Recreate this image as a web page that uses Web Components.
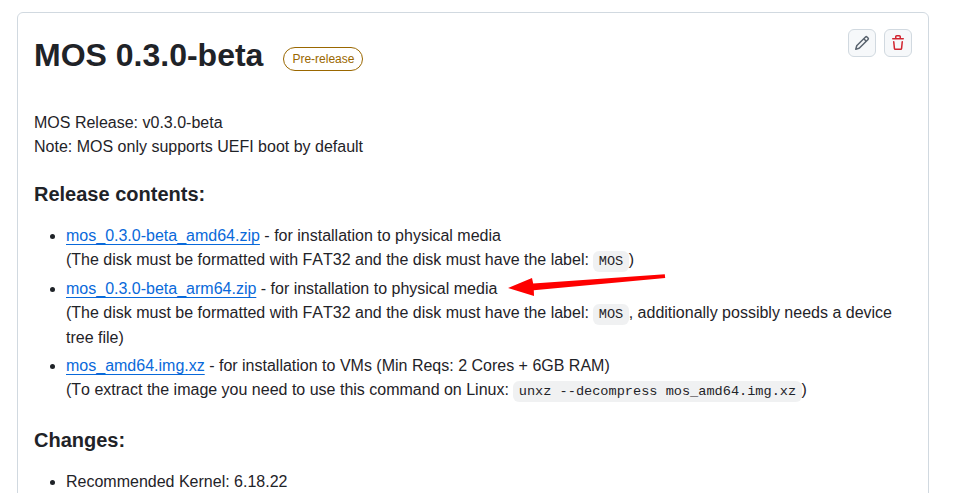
<!DOCTYPE html>
<html lang="en">
<head>
<meta charset="utf-8">
<title>MOS 0.3.0-beta</title>
<style>
    html, body { height: 100%; overflow: hidden; }
    body {
        margin: 0;
        background: #fff;
        color: #1f2328;
        font: 16px/24px "Liberation Sans", Arial, sans-serif;
        font-kerning: none;
    }
</style>
</head>
<body>
<release-page>
    <release-card heading="MOS 0.3.0-beta" label="Pre-release">
        <md-para>MOS Release: v0.3.0-beta<br>Note: MOS only supports UEFI boot by default</md-para>
        <md-heading>Release contents:</md-heading>
        <md-list>
            <md-item><md-link>mos_0.3.0-beta_amd64.zip</md-link> - for installation to physical media<br>(The disk must be formatted with FAT32 and the disk must have the label: <md-code>MOS</md-code>)</md-item>
            <md-item><md-link>mos_0.3.0-beta_arm64.zip</md-link> - for installation to physical media<br>(The disk must be formatted with FAT32 and the disk must have the label: <md-code>MOS</md-code>, additionally possibly needs a device tree file)</md-item>
            <md-item><md-link>mos_amd64.img.xz</md-link> - for installation to VMs (Min Reqs: 2 Cores + 6GB RAM)<br>(To extract the image you need to use this command on Linux: <md-code>unxz --decompress mos_amd64.img.xz</md-code>)</md-item>
        </md-list>
        <md-heading>Changes:</md-heading>
        <md-list>
            <md-item>Recommended Kernel: 6.18.22</md-item>
        </md-list>
    </release-card>
    <red-arrow></red-arrow>
</release-page>

<script>
class ReleasePage extends HTMLElement {
    constructor() {
        super();
        this.attachShadow({ mode: 'open' });
        this.shadowRoot.innerHTML = `
            <style>
                :host {
                    display: block;
                    position: relative;
                    padding: 12px 26px 0 17px;
                }
            </style>
            <slot></slot>
        `;
    }
}

class ReleaseCard extends HTMLElement {
    constructor() {
        super();
        this.attachShadow({ mode: 'open' });
    }

    connectedCallback() {
        const heading = this.getAttribute('heading');
        const label = this.getAttribute('label');

        this.shadowRoot.innerHTML = `
            <style>
                :host {
                    display: block;
                    border: 1px solid #d1d9e0;
                    border-radius: 6px;
                    padding: 16px;
                }
                .head {
                    display: flex;
                    align-items: flex-start;
                    justify-content: space-between;
                    margin-bottom: 30px;
                }
                .title {
                    display: flex;
                    align-items: center;
                    gap: 20px;
                }
                h1 {
                    margin: 0;
                    font-size: 32px;
                    line-height: 52px;
                    font-weight: 700;
                }
                .label {
                    display: inline-block;
                    border: 1px solid #9a6700;
                    border-radius: 12px;
                    padding: 0 8px;
                    margin-top: 8px;
                    font-size: 12px;
                    line-height: 22px;
                    font-weight: 500;
                    color: #9a6700;
                }
                .actions {
                    display: flex;
                    gap: 8px;
                }
            </style>
            <div class="head">
                <div class="title">
                    <h1>${heading}</h1>
                    <span class="label">${label}</span>
                </div>
                <div class="actions">
                    <icon-button icon="pencil" aria-label="Edit"></icon-button>
                    <icon-button icon="trash" aria-label="Delete"></icon-button>
                </div>
            </div>
            <slot></slot>
        `;
    }
}

const icons = {
    pencil: { color: '#59636e', d: 'M11.013 1.427a1.75 1.75 0 0 1 2.474 0l1.086 1.086a1.75 1.75 0 0 1 0 2.474l-8.61 8.61c-.21.21-.47.364-.756.445l-3.251.93a.75.75 0 0 1-.927-.928l.929-3.25c.081-.286.235-.547.445-.758l8.61-8.61Zm.176 4.823L9.75 4.81l-6.286 6.287a.253.253 0 0 0-.064.108l-.558 1.953 1.953-.558a.253.253 0 0 0 .108-.064Zm1.238-3.763a.25.25 0 0 0-.354 0L10.811 3.75l1.439 1.44 1.263-1.263a.25.25 0 0 0 0-.354Z' },
    trash: { color: '#d1242f', d: 'M11 1.75V3h2.25a.75.75 0 0 1 0 1.5H2.75a.75.75 0 0 1 0-1.5H5V1.75C5 .784 5.784 0 6.75 0h2.5C10.216 0 11 .784 11 1.75ZM4.496 6.675l.66 6.6a.25.25 0 0 0 .249.225h5.19a.25.25 0 0 0 .249-.225l.66-6.6a.75.75 0 0 1 1.492.149l-.66 6.6A1.748 1.748 0 0 1 10.595 15h-5.19a1.75 1.75 0 0 1-1.741-1.575l-.66-6.6a.75.75 0 1 1 1.492-.15ZM6.5 1.75V3h3V1.75a.25.25 0 0 0-.25-.25h-2.5a.25.25 0 0 0-.25.25Z' }
};

class IconButton extends HTMLElement {
    constructor() {
        super();
        this.attachShadow({ mode: 'open' });
    }

    connectedCallback() {
        const icon = icons[this.getAttribute('icon')];

        this.shadowRoot.innerHTML = `
            <style>
                :host {
                    display: flex;
                    align-items: center;
                    justify-content: center;
                    width: 26px;
                    height: 26px;
                    background: #f6f8fa;
                    border: 1px solid #d1d9e0;
                    border-radius: 6px;
                }
                svg { display: block; fill: ${icon.color}; }
            </style>
            <svg width="16" height="16" viewBox="0 0 16 16"><path d="${icon.d}"></path></svg>
        `;
    }
}

class MdPara extends HTMLElement {
    constructor() {
        super();
        this.attachShadow({ mode: 'open' });
        this.shadowRoot.innerHTML = `
            <style>:host { display: block; margin-bottom: 16px; }</style><slot></slot>`;
    }
}

class MdHeading extends HTMLElement {
    constructor() {
        super();
        this.attachShadow({ mode: 'open' });
        this.shadowRoot.innerHTML = `
            <style>
                :host {
                    display: block;
                    margin: 23px 0 17px;
                    font-size: 20px;
                    line-height: 25px;
                    font-weight: 600;
                }
            </style><slot></slot>`;
    }
}

class MdList extends HTMLElement {
    constructor() {
        super();
        this.attachShadow({ mode: 'open' });
        this.shadowRoot.innerHTML = `
            <style>
                :host {
                    display: flex;
                    flex-direction: column;
                    gap: 4px;
                    padding-left: 32px;
                    margin-bottom: 25px;
                }
            </style><slot></slot>`;
    }
}

class MdItem extends HTMLElement {
    constructor() {
        super();
        this.attachShadow({ mode: 'open' });
        this.shadowRoot.innerHTML = `
            <style>:host { display: list-item; list-style: disc; }</style><slot></slot>`;
    }
}

// inline hosts: no whitespace around the slot, it would get underlined / painted
class MdLink extends HTMLElement {
    constructor() {
        super();
        this.attachShadow({ mode: 'open' });
        this.shadowRoot.innerHTML = `<style>
                :host { display: inline; color: #0969da; text-decoration: underline; text-underline-offset: .2rem; }
            </style><slot></slot>`;
    }
}

class MdCode extends HTMLElement {
    constructor() {
        super();
        this.attachShadow({ mode: 'open' });
        this.shadowRoot.innerHTML = `<style>
                :host {
                    display: inline;
                    padding: .25em .4em;
                    border-radius: 6px;
                    background: #818b981f;
                    font-family: "Liberation Mono", monospace;
                    font-size: 85%;
                    line-height: 22px;
                }
            </style><slot></slot>`;
    }
}

// annotation drawn over the text
class RedArrow extends HTMLElement {
    constructor() {
        super();
        this.attachShadow({ mode: 'open' });
        this.shadowRoot.innerHTML = `
            <style>
                :host { position: absolute; left: 500px; top: 265px; }
                svg { display: block; }
            </style>
            <svg width="175" height="40" viewBox="0 0 175 40">
                <path fill="#fe0000" d="M8 23 32 13 33.2 18.6 164.8 9.2 165.2 13 33.8 25.2 34 31Z"></path>
            </svg>
        `;
    }
}

customElements.define('release-page', ReleasePage);
customElements.define('release-card', ReleaseCard);
customElements.define('icon-button', IconButton);
customElements.define('md-para', MdPara);
customElements.define('md-heading', MdHeading);
customElements.define('md-list', MdList);
customElements.define('md-item', MdItem);
customElements.define('md-link', MdLink);
customElements.define('md-code', MdCode);
customElements.define('red-arrow', RedArrow);
</script>
</body>
</html>
